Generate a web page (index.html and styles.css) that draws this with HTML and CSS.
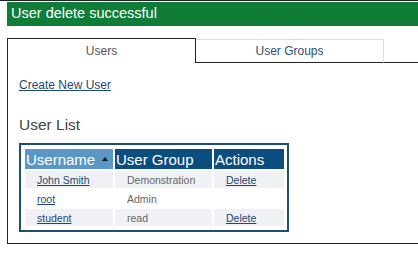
FILE: index.html
```html
<!DOCTYPE html>
<html lang="en">
<head>
    <meta charset="UTF-8">
    <title>User Management</title>
    <link rel="stylesheet" href="styles.css">
</head>
<body>
    <!-- Status message -->
    <div class="top-line"></div>
    <div class="message">User delete successful</div>

    <!-- Tabbed panel -->
    <div class="panel">
        <div class="tabs">
            <div class="tab active">Users</div>
            <div class="tab">User Groups</div>
            <div class="tab-fill"></div>
        </div>

        <div class="panel-body">
            <a href="#" class="create-link">Create New User</a>
            <h2>User List</h2>

            <div class="list-box">
                <table class="user-table">
                    <tr>
                        <th class="sorted col-name">Username <span class="arrow"></span></th>
                        <th class="col-group">User Group</th>
                        <th class="col-actions">Actions</th>
                    </tr>
                    <tr class="odd">
                        <td><a href="#">John Smith</a></td>
                        <td>Demonstration</td>
                        <td><a href="#">Delete</a></td>
                    </tr>
                    <tr>
                        <td><a href="#">root</a></td>
                        <td>Admin</td>
                        <td></td>
                    </tr>
                    <tr class="odd">
                        <td><a href="#">student</a></td>
                        <td>read</td>
                        <td><a href="#">Delete</a></td>
                    </tr>
                </table>
            </div>
        </div>
    </div>
</body>
</html>
```

FILE: styles.css
```css
/* Global Styles */
body {
    font-family: 'Liberation Sans', Arial, sans-serif;
    margin: 0;
    background-color: #fff;
    color: #444;
}

a {
    color: #1d4873;
}

/* Status message */
.top-line {
    height: 1px;
    background-color: #222;
    margin-bottom: 1px;
}

.message {
    margin-left: 7px;
    height: 24px;
    line-height: 23px;
    padding-left: 4px;
    background-color: #0f7d38;
    color: #fff;
    font-size: 14.5px;
}

/* Panel with tabs */
.panel {
    margin: 12px 0 0 7px;
    border-left: 1px solid #222;
    border-bottom: 1px solid #222;
    height: 205px;
}

.tabs {
    display: flex;
    height: 25px;
}

.tab {
    width: 187px;
    text-align: center;
    font-size: 12px;
    line-height: 23px;
    color: #2c4d6f;
    margin-top: 1px;
    border-top: 1px solid #ddd;
    border-right: 1px solid #ddd;
    border-bottom: 1px solid #222;
}

.tab.active {
    margin-top: 0;
    line-height: 24px;
    color: #555;
    border-top: 1px solid #222;
    border-right: 1px solid #222;
    border-bottom: none;
}

.tab-fill {
    flex: 1;
    border-bottom: 1px solid #222;
}

.panel-body {
    padding: 12px 0 0 11px;
}

.create-link {
    font-size: 12px;
}

.panel-body h2 {
    font-size: 15.5px;
    font-weight: normal;
    color: #444;
    margin: 23px 0 9px 0;
}

/* User list */
.list-box {
    display: inline-block;
    border: 2px solid #1d4f6e;
    padding: 4px 3px 4px 4px;
}

.user-table {
    border-collapse: separate;
    border-spacing: 2px;
    margin: -2px;
}

.user-table th {
    background-color: #0c4d80;
    color: #fff;
    font-size: 15px;
    font-weight: normal;
    text-align: left;
    padding: 0 0 0 1px;
    height: 20px;
}

.user-table th.sorted {
    background-color: #5a97c5;
}

.col-name { width: 87px; }
.col-group { width: 96px; }
.col-actions { width: 69px; }

/* sort arrow */
.arrow {
    display: inline-block;
    width: 0;
    height: 0;
    border-left: 3px solid transparent;
    border-right: 3px solid transparent;
    border-bottom: 4px solid #111;
    vertical-align: 4px;
    margin-left: 3px;
}

.user-table td {
    font-size: 10.5px;
    color: #666;
    height: 17px;
    padding: 0 0 0 12px;
}

.user-table tr.odd td {
    background-color: #eff1f5;
}
```
